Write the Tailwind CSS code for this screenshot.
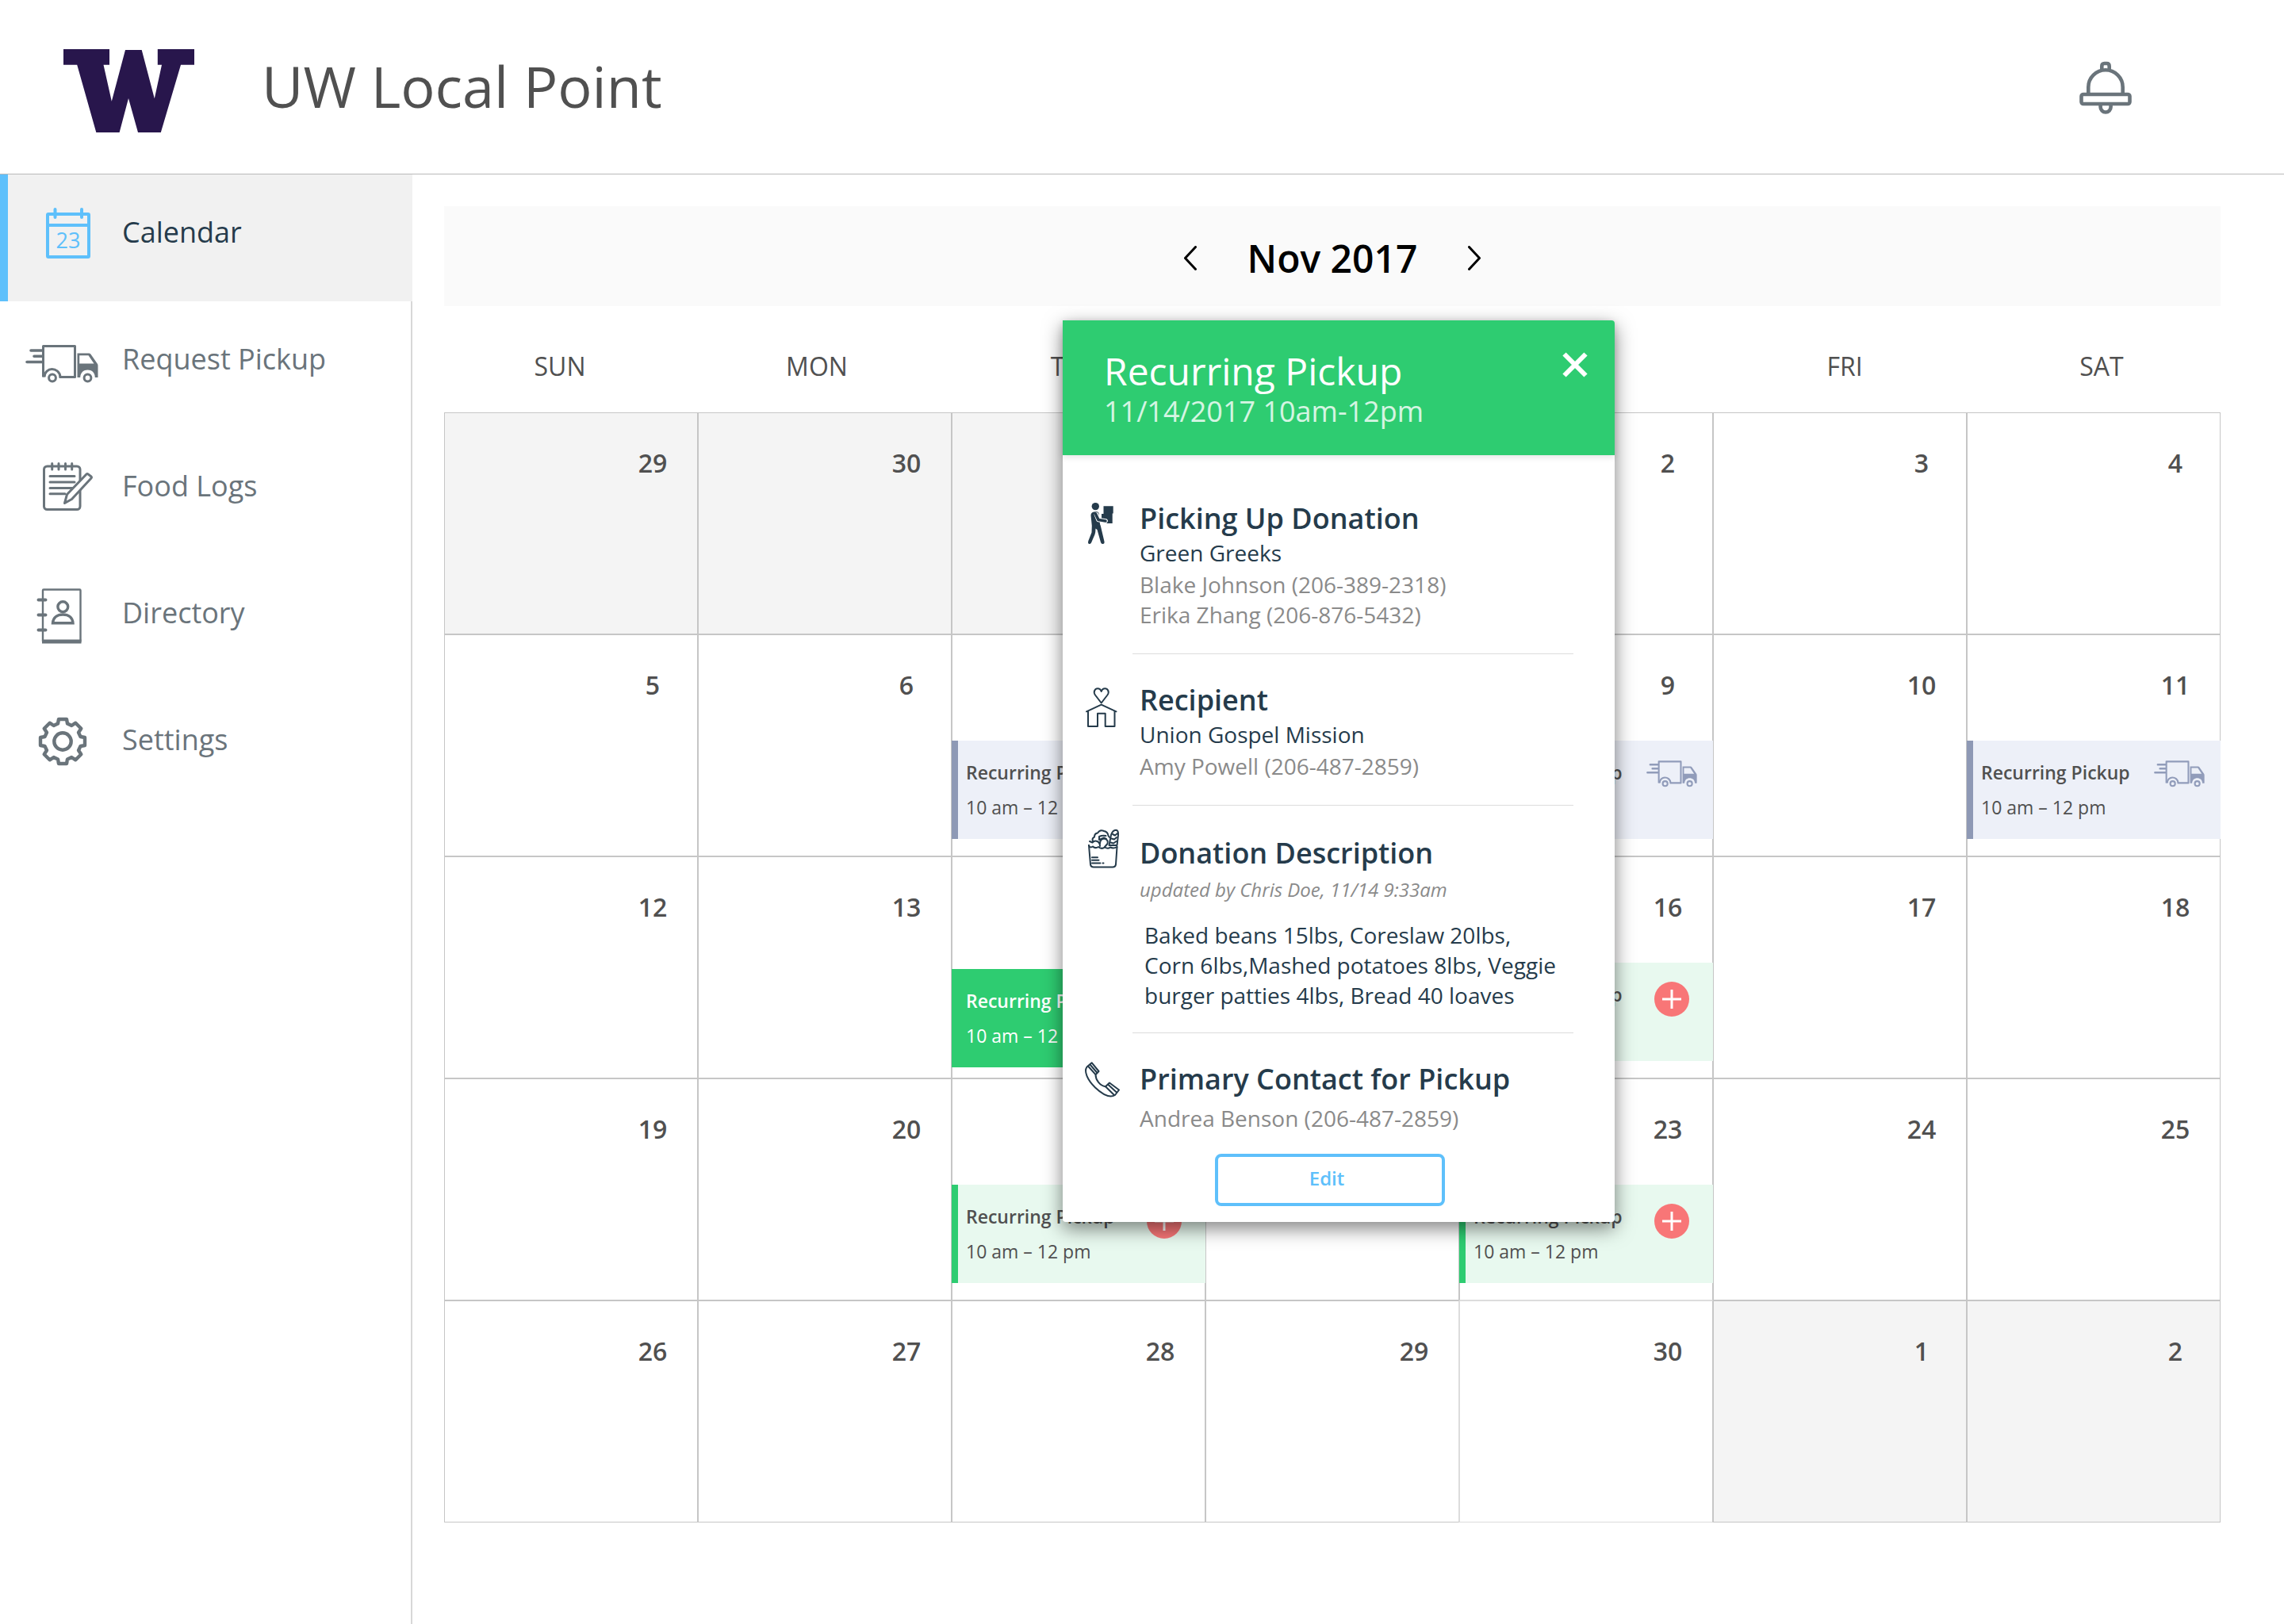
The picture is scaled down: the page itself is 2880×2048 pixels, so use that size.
<!DOCTYPE html>
<html lang="en">
<head>
<meta charset="utf-8">
<title>UW Local Point</title>
<script src="https://cdn.jsdelivr.net/npm/@tailwindcss/browser@4"></script>
</head>
<body class="min-h-screen flex flex-col bg-white font-['Open_Sans',sans-serif] text-[#505050]">

<!-- Shared icons -->
<svg class="hidden" aria-hidden="true">
  <symbol id="truck" viewBox="0 0 92 48">
    <g fill="none" stroke="currentColor" stroke-width="3" stroke-linejoin="round">
      <path d="M42.500 40.400H62.500V1.500H22.500V40.400"/>
      <path d="M24 40.500C24 34 29 30.500 33.500 30.500S43.500 33.500 44 40.500"/>
      <circle cx="34" cy="41.500" r="4.400"/>
      <circle cx="78.500" cy="41.500" r="4.400"/>
    </g>
    <path fill="none" stroke="currentColor" stroke-width="3.600" stroke-linecap="round" d="M7 7H21M11 14.200H21M2 21.500H21"/>
    <path fill="currentColor" fill-rule="evenodd" d="M65.500 10.500H80Q81.500 10.500 82.500 11.800L91 24Q91.500 25 91.500 26V41H87.800C87.800 34.500 83.500 31.500 78.500 31.500S69.500 34.500 69.200 41H65.500ZM68.200 13.200V23.500H86.500L79.500 13.200Z"/>
  </symbol>
  <symbol id="plus" viewBox="0 0 44 44">
    <circle cx="22" cy="22" r="22" fill="#f87677"/>
    <path d="M22 10V34M10 22H34" stroke="#fff" stroke-width="3"/>
  </symbol>
</svg>

<header class="flex items-center h-[220px] pl-20 pr-48 border-b border-[#b9b9b9]">
  <svg class="w-[165px] h-[105px] mt-2.5 shrink-0" viewBox="0 0 165 105" fill="#28164c" role="img" aria-label="University of Washington">
    <path d="M0 0H58V19.700H50.500L60.800 65.700L78 1H98.700L114.800 62.300L124 19.700H118.800V0H165V19.700H148L122.800 105H94L82 62L70.600 105H41.300L17.200 19.700H0Z"/>
  </svg>
  <h1 class="ml-[85px] pb-1 text-[72px] leading-[96px]">UW Local Point</h1>
  <button class="ml-auto mt-0.5 text-[#6a747b]" aria-label="Notifications">
    <svg class="w-[66px] h-[68px]" viewBox="0 0 66 68" fill="none" stroke="currentColor" stroke-width="4.600">
      <rect x="2.500" y="42" width="61" height="12" rx="2.500"/>
      <path d="M11.300 42V33A21.700 21.700 0 0 1 54.700 33V42"/>
      <path d="M28.300 12V6.500Q28.300 3 31.500 3H34.500Q37.700 3 37.700 6.500V12"/>
      <path d="M26.600 55V58A6.500 6.500 0 0 0 39.600 58V55"/>
    </svg>
  </button>
</header>

<div class="flex grow">
  <nav class="w-[520px] shrink-0 border-r-2 border-[#d8d8d8] text-[36px] leading-[48px] text-[#6a747b]">
    <a href="#" aria-current="page" class="flex items-center gap-7 h-40 pb-3.5 pl-5 -mr-0.5 border-l-[10px] border-[#5ec0fb] bg-[#f1f1f1] text-[#253b4b]">
      <svg class="w-24 h-20" viewBox="0 0 96 80" fill="none" stroke="#5ec0fb" stroke-width="4">
        <rect x="30" y="17" width="52" height="54" rx="1"/>
        <path d="M30 31H82"/><path stroke-linecap="round" d="M39.500 11V21M73 11V21"/>
        <text x="56" y="60" text-anchor="middle" font-size="27" font-weight="500" fill="#5ec0fb" stroke="none">23</text>
      </svg>
      Calendar
    </a>
    <a href="#" class="flex items-center gap-7 h-40 pb-3.5 pl-5 border-l-[10px] border-transparent">
      <svg class="w-24 h-20" viewBox="0 0 96 80"><use href="#truck" x="2" y="22" width="92" height="48"/></svg>
      Request Pickup
    </a>
    <a href="#" class="flex items-center gap-7 h-40 pb-3.5 pl-5 border-l-[10px] border-transparent">
      <svg class="w-24 h-20" viewBox="0 0 96 80" fill="none" stroke="currentColor" stroke-width="3" stroke-linecap="round" stroke-linejoin="round">
        <rect x="25.500" y="15" width="45.500" height="54.500" rx="4"/>
        <path d="M35.700 11.500V19M44 11.500V19M52.500 11.500V19M60.700 11.500V19M33 27.500H64M33 35H64M33 42.500H63M33 49.800H52"/>
        <path fill="#fff" d="M51.500 61.500L54.500 50.500L79 25Q80 24 81 24.800L85 28Q86 29 85 30L60.500 56.500Z"/>
      </svg>
      Food Logs
    </a>
    <a href="#" class="flex items-center gap-7 h-40 pb-3.5 pl-5 border-l-[10px] border-transparent">
      <svg class="w-24 h-20" viewBox="0 0 96 80" fill="none" stroke="currentColor" stroke-width="2.400">
        <rect x="24" y="10.500" width="47.500" height="66" rx="1"/>
        <path stroke-width="5" d="M23 76H72.500"/>
        <path stroke-width="4" stroke-linecap="round" d="M18.500 23.500H27.500M18.500 42.500H27.500M18.500 61.500H27.500"/>
        <circle cx="49.300" cy="32.200" r="6.400" stroke-width="3.400"/>
        <path stroke-width="3.400" d="M36.500 52.800H62C61.500 45.500 56 42 49.300 42S37 45.500 36.500 52.800Z"/>
      </svg>
      Directory
    </a>
    <a href="#" class="flex items-center gap-7 h-40 pb-3.5 pl-5 border-l-[10px] border-transparent">
      <svg class="w-24 h-20" viewBox="0 0 96 80" fill="none" stroke="currentColor" stroke-width="4.400" stroke-linejoin="round">
        <g transform="translate(49 42)">
          <circle r="10.700"/>
          <path d="M-6-22.500L-5-28H5L6-22.500L11.300-20L16.300-23.300L23.300-16.300L20-11.300L22.500-6L28-5V5L22.500 6L20 11.300L23.300 16.300L16.300 23.300L11.300 20L6 22.500L5 28H-5L-6 22.500L-11.300 20L-16.300 23.300L-23.300 16.300L-20 11.300L-22.500 6L-28 5V-5L-22.500-6L-20-11.300L-23.300-16.300L-16.300-23.300L-11.300-20Z"/>
        </g>
      </svg>
      Settings
    </a>
  </nav>

  <main class="grow pt-10 pl-10 pr-20 pb-32">
    <div class="relative">
      <div class="flex items-center justify-center gap-16 h-[126px] pt-1.5 bg-[#fafafa] text-black">
        <button aria-label="Previous month"><svg class="w-4 h-8" viewBox="0 0 16 32" fill="none" stroke="currentColor" stroke-width="3" stroke-linecap="round" stroke-linejoin="round"><path d="M14.500 1.500L1.500 15.500L14.500 29.500"/></svg></button>
        <h2 class="text-[48px] leading-[64px] font-semibold">Nov 2017</h2>
        <button aria-label="Next month"><svg class="w-4 h-8" viewBox="0 0 16 32" fill="none" stroke="currentColor" stroke-width="3" stroke-linecap="round" stroke-linejoin="round"><path d="M1.500 1.500L14.500 15.500L1.500 29.500"/></svg></button>
      </div>

      <table class="block">
        <thead class="block -ml-4 -mr-3">
          <tr class="grid grid-cols-7 h-[134px] pt-[52px] text-[32px] leading-[48px] [&>th]:font-normal">
            <th>SUN</th><th>MON</th><th>TUE</th><th>WED</th><th>THU</th><th>FRI</th><th>SAT</th>
          </tr>
        </thead>
        <tbody class="block [&>tr]:grid [&>tr]:grid-cols-7 [&>tr]:h-[280px] [&_td]:flex [&_td]:flex-col [&_td]:border [&_td]:border-[#c6c6c6] [&_td]:pt-[43px] [&_time]:self-end [&_time]:w-10 [&_time]:mr-9 [&_time]:text-center [&_time]:text-[32px] [&_time]:leading-[40px] [&_time]:font-semibold">
          <tr>
            <td class="bg-[#f4f4f4]"><time>29</time></td>
            <td class="bg-[#f4f4f4]"><time>30</time></td>
            <td class="bg-[#f4f4f4]"><time>31</time></td>
            <td><time>1</time></td>
            <td><time>2</time></td>
            <td><time>3</time></td>
            <td><time>4</time></td>
          </tr>
          <tr>
            <td><time>5</time></td>
            <td><time>6</time></td>
            <td><time>7</time>
              <a href="#" class="flex justify-between h-[124px] mt-auto mb-[21px] -mx-px pt-[18px] pl-2.5 pr-5 border-l-8 border-[#8e99b5] bg-[#edf0f8] text-[23px] leading-[44px]">
                <span><b class="block font-semibold">Recurring Pickup</b>10 am – 12 pm</span>
                <svg class="w-16 h-9 mt-1.5 text-[#919cba]"><use href="#truck"/></svg>
              </a></td>
            <td><time>8</time></td>
            <td><time>9</time>
              <a href="#" class="flex justify-between h-[124px] mt-auto mb-[21px] -mx-px pt-[18px] pl-2.5 pr-5 border-l-8 border-[#8e99b5] bg-[#edf0f8] text-[23px] leading-[44px]">
                <span><b class="block font-semibold">Recurring Pickup</b>10 am – 12 pm</span>
                <svg class="w-16 h-9 mt-1.5 text-[#919cba]"><use href="#truck"/></svg>
              </a></td>
            <td><time>10</time></td>
            <td><time>11</time>
              <a href="#" class="flex justify-between h-[124px] mt-auto mb-[21px] -mx-px pt-[18px] pl-2.5 pr-5 border-l-8 border-[#8e99b5] bg-[#edf0f8] text-[23px] leading-[44px]">
                <span><b class="block font-semibold">Recurring Pickup</b>10 am – 12 pm</span>
                <svg class="w-16 h-9 mt-1.5 text-[#919cba]"><use href="#truck"/></svg>
              </a></td>
          </tr>
          <tr>
            <td><time>12</time></td>
            <td><time>13</time></td>
            <td><time>14</time>
              <a href="#" class="flex justify-between h-[124px] mt-auto mb-[13px] -mx-px pt-[18px] pl-2.5 pr-[30px] border-l-8 border-[#2ecc71] bg-[#2ecc71] text-white text-[23px] leading-[44px]">
                <span><b class="block font-semibold">Recurring Pickup</b>10 am – 12 pm</span>
              </a></td>
            <td><time>15</time></td>
            <td><time>16</time>
              <a href="#" class="flex justify-between h-[124px] mt-auto mb-[21px] -mx-px pt-[18px] pl-2.5 pr-[30px] border-l-8 border-[#2ecc71] bg-[#e8f9ef] text-[23px] leading-[44px]">
                <span><b class="block font-semibold">Recurring Pickup</b>10 am – 12 pm</span>
                <svg class="size-11 mt-1.5"><use href="#plus"/></svg>
              </a></td>
            <td><time>17</time></td>
            <td><time>18</time></td>
          </tr>
          <tr>
            <td><time>19</time></td>
            <td><time>20</time></td>
            <td><time>21</time>
              <a href="#" class="flex justify-between h-[124px] mt-auto mb-[21px] -mx-px pt-[18px] pl-2.5 pr-[30px] border-l-8 border-[#2ecc71] bg-[#e8f9ef] text-[23px] leading-[44px]">
                <span><b class="block font-semibold">Recurring Pickup</b>10 am – 12 pm</span>
                <svg class="size-11 mt-1.5"><use href="#plus"/></svg>
              </a></td>
            <td><time>22</time></td>
            <td class="border-b-[#dcdcdc]!"><time>23</time>
              <a href="#" class="flex justify-between h-[124px] mt-auto mb-[21px] -mx-px pt-[18px] pl-2.5 pr-[30px] border-l-8 border-[#2ecc71] bg-[#e8f9ef] text-[23px] leading-[44px]">
                <span><b class="block font-semibold">Recurring Pickup</b>10 am – 12 pm</span>
                <svg class="size-11 mt-1.5"><use href="#plus"/></svg>
              </a></td>
            <td><time>24</time></td>
            <td><time>25</time></td>
          </tr>
          <tr>
            <td><time>26</time></td>
            <td><time>27</time></td>
            <td><time>28</time></td>
            <td class="border-r-[#dcdcdc]!"><time>29</time></td>
            <td class="border-t-[#dcdcdc]! border-l-[#dcdcdc]! border-b-[#dcdcdc]!"><time>30</time></td>
            <td class="bg-[#f4f4f4]"><time>1</time></td>
            <td class="bg-[#f4f4f4]"><time>2</time></td>
          </tr>
        </tbody>
      </table>

      <!-- Event details -->
      <div role="dialog" aria-labelledby="event-title" class="absolute top-36 left-1/2 -ml-[340px] w-[696px] rounded-b rounded-tr bg-white shadow-[0_8px_24px_rgba(0,0,0,0.5)]">
        <div class="flex justify-between h-[170px] pt-[34px] pl-[52px] pr-[34px] rounded-tr bg-[#2ecc71] text-white shadow-[0_2px_8px_rgba(0,0,0,0.12)]">
          <div>
            <h3 id="event-title" class="text-[48px] leading-[60px]">Recurring Pickup</h3>
            <p class="text-[36px] leading-[42px] text-white/80">11/14/2017 10am-12pm</p>
          </div>
          <button class="self-start mt-1.5" aria-label="Close"><svg class="size-8" viewBox="0 0 32 32" stroke="currentColor" stroke-width="6"><path d="M2.500 2.500L29.500 29.500M29.500 2.500L2.500 29.500"/></svg></button>
        </div>

        <div class="pl-6 pr-[52px] pb-5 text-[28px] leading-[38px] text-[#8a8a8a]">
          <section class="flex gap-4 pt-[58px]">
            <svg class="w-12 h-[60px] shrink-0 text-[#253b4b]" viewBox="0 2 48 60" fill="currentColor">
              <circle cx="17.300" cy="8.600" r="4.700"/>
              <path d="M27.500 8.300H39.700V17.500H38.700V30H31L33 26.500L25 24V18H27.500Z"/>
              <path d="M11.500 20Q11.500 16 15.500 15.500L19 15.200Q21 15.200 21.500 17L23 31Q24 33 24.500 36L28.500 53Q29 56 26.500 56Q24.500 56 24 54L19.500 38L17.500 36.500Q17.500 41 16.500 44L12 54.500Q11 56.500 9 55.700Q7.500 55 8.200 52.500L12.500 41.500L12.800 33Z"/>
              <path fill="none" stroke="#fff" stroke-width="5.600" stroke-linecap="round" stroke-linejoin="round" d="M18.500 19L21 25.500L30 27"/>
              <path fill="none" stroke="currentColor" stroke-width="3.600" stroke-linecap="round" stroke-linejoin="round" d="M17.500 18L21 25.500L30 27"/>
            </svg>
            <div class="grow pl-[9px] pb-[30px] border-b border-[#dcdcdc]">
              <h4 class="text-[36px] leading-[44px] font-semibold text-[#253b4b]">Picking Up Donation</h4>
              <p class="leading-[42px] text-[#253b4b]">Green Greeks</p>
              <p>Blake Johnson (206-389-2318)</p>
              <p>Erika Zhang (206-876-5432)</p>
            </div>
          </section>

          <section class="flex gap-4 pt-9">
            <svg class="w-12 h-[60px] shrink-0 text-[#253b4b]" viewBox="0 1 48 60" fill="none" stroke="currentColor" stroke-width="2" stroke-linecap="round" stroke-linejoin="round">
              <path d="M24.700 26.500L17 16.500C14 12 17 8.300 20 8.300Q23.500 8.300 24.700 12Q26 8.300 29.400 8.300C32.500 8.300 35.500 12 32.400 16.500Z"/>
              <path d="M6 37.300L24.700 28.700L43.500 37.300M8 37V56H20V39.800H29.700V56H41.500V37"/>
            </svg>
            <div class="grow pl-[9px] pb-[30px] border-b border-[#dcdcdc]">
              <h4 class="text-[36px] leading-[44px] font-semibold text-[#253b4b]">Recipient</h4>
              <p class="leading-[42px] text-[#253b4b]">Union Gospel Mission</p>
              <p>Amy Powell (206-487-2859)</p>
            </div>
          </section>

          <section class="flex gap-4 pt-[38px]">
            <svg class="w-12 h-[60px] -mt-2.5 shrink-0 text-[#253b4b]" viewBox="0 0 48 60" fill="none" stroke="currentColor" stroke-width="2" stroke-linecap="round" stroke-linejoin="round">
              <path d="M9 22L11 46Q11.500 49.500 15 49.500H39Q42.500 49.500 43 46L44.500 24"/>
              <path d="M9 22Q10.500 26 14 23.500Q17 26.500 21 24Q25 27.500 29 24.500Q33 27 36 24.500Q40 26.500 44.500 24"/>
              <path d="M34.500 22L37 9Q39 3 43 2.800Q46.500 3 46 9L44.500 22Z"/>
              <path d="M39 8L42 9.500L45 7M37.500 13.500L41 14.500L44 12M36.500 18.500L40 19.500L43.500 17"/>
              <path d="M14 17Q12.500 13 16 11.500Q16 7 20 6.500Q23 1.500 28 4Q33 5 33.500 10L35 12"/>
              <path d="M10 17L13.500 18.500Q16 15.500 19.500 17Q23 18.500 23 23M22 11Q26 9 30.500 10M22 11V15L28 12.500L31 14M23 20Q23 14 28.500 13.500Q34 15 32.500 20L29 24"/>
              <path d="M13 37.200H20M13 40.800H21.500M13 44.400H23.500M26.500 44.400H27.500"/>
            </svg>
            <div class="grow pl-[9px] pb-7 border-b border-[#dcdcdc]">
              <h4 class="text-[36px] leading-[44px] font-semibold text-[#253b4b]">Donation Description</h4>
              <p class="mt-1 text-2xl leading-[40px] italic">updated by Chris Doe, 11/14 9:33am</p>
              <p class="mt-[18px] pl-1.5 pr-4 text-[#253b4b]">Baked beans 15lbs, Coreslaw 20lbs, Corn 6lbs,Mashed potatoes 8lbs, Veggie burger patties 4lbs, Bread 40 loaves</p>
            </div>
          </section>

          <section class="flex gap-4 pt-9">
            <svg class="w-12 h-[60px] shrink-0 text-[#253b4b]" viewBox="0 0 48 60" fill="none" stroke="currentColor" stroke-width="2" stroke-linejoin="round">
              <path d="M12.600 1.200L21.500 12L17.500 16.200C17.500 23 23 30 30 31.300L35 26.500L47 35.500L42 42C36 45.500 27 42 17 32.500C7 22.500 2.500 12 6.500 6.500Z"/>
              <path d="M8 5.500L17.500 16.200M10.500 3.500L19.500 14M30 31.300L41.500 42.500M33 28.500L44.500 39"/>
            </svg>
            <div class="grow pl-[9px]">
              <h4 class="text-[36px] leading-[44px] font-semibold text-[#253b4b]">Primary Contact for Pickup</h4>
              <p class="mt-2">Andrea Benson (206-487-2859)</p>
            </div>
          </section>

          <button class="block w-[290px] h-[66px] mt-[26px] ml-[168px] pb-1 pr-2 rounded-lg border-4 border-[#5ec0fb] text-2xl font-semibold text-[#5ec0fb]">Edit</button>
        </div>
      </div>
    </div>
  </main>
</div>
</body>
</html>
